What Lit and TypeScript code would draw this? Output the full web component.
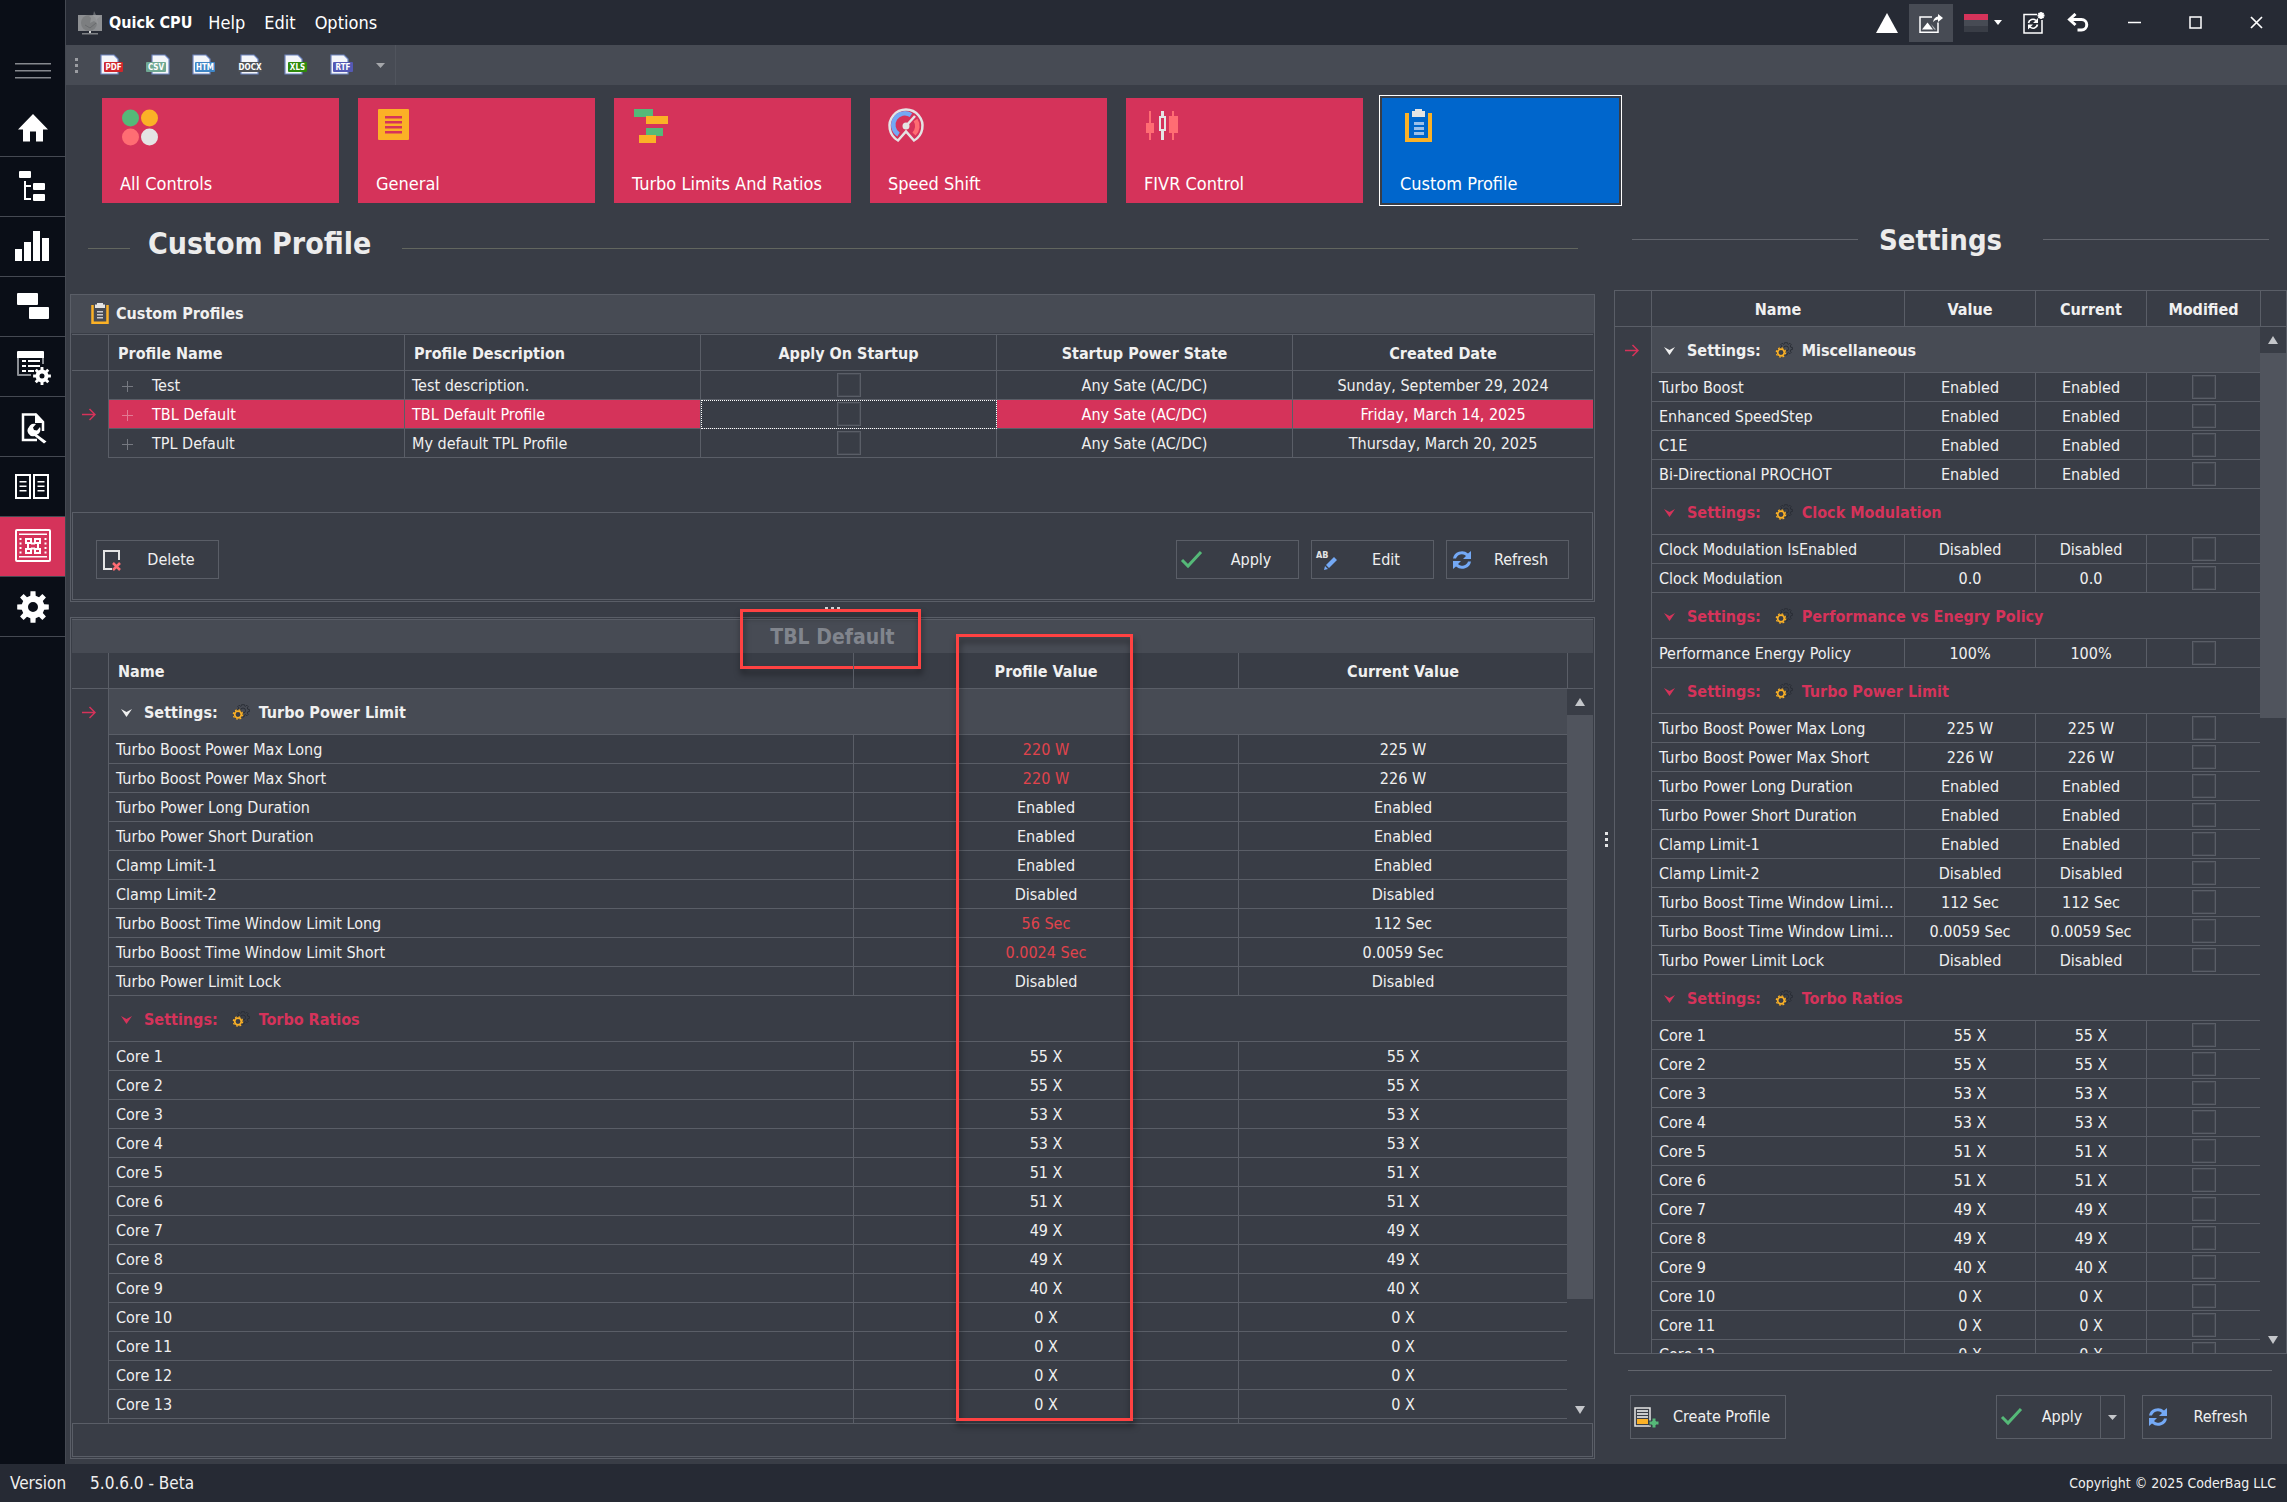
import { LitElement, html, svg, css, nothing, TemplateResult } from "lit";
import { customElement, property } from "lit/decorators.js";
import { classMap } from "lit/directives/class-map.js";

/** Path of a cog wheel with square teeth and a round hole. */
function cog(cx: number, cy: number, outer: number, inner: number, hole: number, teeth = 8): string {
  const pts: string[] = [];
  const step = (Math.PI * 2) / teeth;
  for (let i = 0; i < teeth; i++) {
    const a = i * step - Math.PI / 2;
    const parts: [number, number][] = [[-0.3, inner], [-0.2, outer], [0.2, outer], [0.3, inner]];
    for (const [f, r] of parts) {
      const t = a + f * step;
      pts.push(`${(cx + Math.cos(t) * r).toFixed(2)} ${(cy + Math.sin(t) * r).toFixed(2)}`);
    }
  }
  return `M${pts.join("L")}Z M${cx - hole} ${cy}a${hole} ${hole} 0 1 0 ${hole * 2} 0a${hole} ${hole} 0 1 0 ${-hole * 2} 0Z`;
}

const base = css`
  *, *::before, *::after { box-sizing: border-box; }
  svg { display: block; flex: none; }
  button {
    font: inherit; color: inherit; background: none; border: 0; margin: 0; padding: 0;
    cursor: pointer; display: flex; align-items: center; justify-content: center;
  }
`;

/* ---------- icons ---------- */

const navIcons: { label: string; art: TemplateResult }[] = [
  { label: "Home", art: svg`<path d="M33 17L48 32.500H43V44.500H36V34.500H30V44.500H23V32.500H18Z"/>` },
  { label: "Device tree", art: svg`<rect x="19" y="14" width="12" height="7" rx="1"/><rect x="33" y="26" width="12" height="7" rx="1"/><rect x="33" y="37" width="12" height="7" rx="1"/><path d="M24 24h2v4h5v2h-5v11h5v2h-7z"/>` },
  { label: "Charts", art: svg`<path d="M15 32h7v12h-7zM24 25h7v19h-7zM33 14h7v30h-7zM42 21h7v23h-7z"/>` },
  { label: "Windows", art: svg`<rect x="17" y="16" width="21" height="12" rx="1"/><rect x="29" y="30" width="20" height="12" rx="1"/>` },
  { label: "Table options", art: svg`<path d="M17 15q0-1 1-1h25q1 0 1 1v6h-27z"/><path fill="#8b8e94" d="M17 21h2v16h12v2h-13q-1 0-1-1zM42 21h2v6h-2z"/><path d="M22 23h4v2h-4zM28 23h12v2h-12zM22 28h4v2h-4zM28 28h12v2h-12zM22 33h4v2h-4zM28 33h6v2h-6z"/><path fill-rule="evenodd" d="${cog(42, 39, 9, 6.5, 2.5)}"/>` },
  { label: "Diagnostics", art: svg`<path fill="none" stroke="#fff" stroke-width="2.500" d="M37 43H23V17.500H36L43 25V34"/><path d="M35 16v10h9z"/><path d="M29 30a5.500 5.500 0 0 1 7-3l-3 3.500 1 2.500 3 .5 3-3.500a5.500 5.500 0 0 1-3 7.500l9.500 7-2.500 2-9.500-7.500a5.500 5.500 0 0 1-5.500-9z"/>` },
  { label: "Documentation", art: svg`<rect x="16" y="18" width="14" height="23" fill="none" stroke="#fff" stroke-width="2"/><rect x="34" y="18" width="14" height="23" fill="none" stroke="#fff" stroke-width="2"/><path d="M19.500 24h7v1.500h-7zM19.500 28.500h7v1.500h-7zM19.500 33h7v1.500h-7zM37.500 24h7v1.500h-7zM37.500 28.500h7v1.500h-7zM37.500 33h7v1.500h-7z"/>` },
  { label: "Processor controls", art: svg`<rect x="16" y="13" width="34" height="31" rx="1" fill="none" stroke="#fff" stroke-width="2"/><path d="M19 16.500h28v1.500h-28zM19 39h28v1.500h-28z"/><g fill="none" stroke="#fff" stroke-width="2"><path stroke-dasharray="2 2.500" d="M20.500 21v17M45.500 21v17"/><rect x="26" y="22" width="5" height="4"/><rect x="35" y="22" width="5" height="4"/><rect x="26" y="32" width="5" height="4"/><rect x="35" y="32" width="5" height="4"/><path d="M31 26.500h4M31 31.500h4M28 27v4M38 27v4"/></g>` },
  { label: "Preferences", art: svg`<path fill-rule="evenodd" d="${cog(33, 30, 16, 11.5, 5)}"/>` },
];

const clipboard = (lines: string) => svg`
  <path fill="none" stroke="#fbb126" stroke-width="4" d="M7 4V31H30V4"/>
  <path fill="${lines}" d="M14 13h10v3h-10zM14 18h10v3h-10zM14 23h10v3h-10z"/>
  <path fill="#e4e4e4" d="M15 0h7v2h3v6H12V2h3z"/>`;

const tiles: { label: string; active?: boolean; art: TemplateResult }[] = [
  { label: "All Controls", art: svg`<circle cx="10.500" cy="9" r="8.500" fill="#55b978"/><circle cx="29.500" cy="9" r="8.500" fill="#fbb126"/><circle cx="10.500" cy="28" r="8.500" fill="#ff6d73"/><circle cx="29.500" cy="28" r="8.500" fill="#e4e4e4"/>` },
  { label: "General", art: svg`<rect x="2" width="31" height="31" rx="1" fill="#fbb126"/><path fill="#d5335a" d="M9 7h17v2.500h-17zM9 12h17v2.500h-17zM9 17h17v2.500h-17zM9 22h17v2.500h-17z"/>` },
  { label: "Turbo Limits And Ratios", art: svg`<path fill="#55b978" d="M2 0h19v8h-19zM14 19h17v8h-17z"/><path fill="#fbb126" d="M14 7h22v8h-22zM7 26h17v8h-17z"/>` },
  { label: "Speed Shift", art: svg`<path fill="none" stroke="#e4e4e4" stroke-width="2.500" d="M10 31.500A16.500 16.500 0 1 1 26 31.500L18 22.500Z"/><path fill="none" stroke="#74a9f5" stroke-width="4.500" d="M10.500 25.500A11 11 0 0 1 23 6.200"/><path fill="none" stroke="#ff6d73" stroke-width="4.500" d="M27.500 11A11 11 0 0 1 26 25"/><circle cx="18" cy="17" r="3.500" fill="#e4e4e4"/><path stroke="#e4e4e4" stroke-width="2.500" d="M18 17L27 7"/>` },
  { label: "FIVR Control", art: svg`<path fill="#ff6d73" d="M5 2h2v12h3v10h-3v7h-2v-7h-3v-10h3zM28 2h2v5h4v17h-4v7h-2v-7h-3v-17h3z"/><path fill="#e4e4e4" fill-rule="evenodd" d="M17 2h3v5h2v15h-2v9h-3v-9h-2v-15h2zM17 9v11h3v-11z"/>` },
  { label: "Custom Profile", active: true, art: clipboard("#9cc0ea") },
];

const exports_: { label: string; color: string; x: number; w: number; page: number }[] = [
  { label: "PDF", color: "#d0272c", x: 4, w: 19, page: 1 },
  { label: "CSV", color: "#6fa893", x: 0, w: 20, page: 6 },
  { label: "HTM", color: "#3f86c6", x: 3, w: 20, page: 1 },
  { label: "DOCX", color: "#4f5257", x: 0, w: 24, page: 3 },
  { label: "XLS", color: "#2f8a0c", x: 4, w: 19, page: 1 },
  { label: "RTF", color: "#5459b4", x: 3, w: 20, page: 1 },
];

const icons = {
  del: svg`<path fill="none" stroke="#e4e4e4" stroke-width="2" d="M12 21H4V3H19V12"/><path stroke="#ff6d73" stroke-width="2.500" d="M13 15l7 7M20 15l-7 7"/>`,
  check: svg`<path fill="none" stroke="#55b978" stroke-width="3" d="M2 12L8 18L21 4"/>`,
  edit: svg`<text x="1" y="10" font-size="9" font-weight="700" fill="#e4e4e4">AB</text><path fill="#74a9f5" d="M19 9l3 3-8 8-3-3zM10 18l3 3-4 1z"/>`,
  refresh: svg`<g fill="#74a9f5"><path d="M3 10.500A9 8.500 0 0 1 18 5.500L21 3V11H13L16 8A6 6 0 0 0 6 10.500Z"/><path d="M21 13.500A9 8.500 0 0 1 6 18.500L3 21V13H11L8 16A6 6 0 0 0 18 13.500Z"/></g>`,
  create: svg`<rect x="1" y="3" width="15" height="18" fill="none" stroke="#e4e4e4" stroke-width="1.500"/><path fill="#c9cacc" d="M3 5h11v2h-11zM3 8h11v2h-11zM3 11h11v2h-11z"/><path fill="#fbb126" d="M3 14h11v5h-11z"/><path fill="#55b978" stroke="#393d46" stroke-width="1" d="M18 13h4v3h3v4h-3v3h-4v-3h-3v-4h3z"/>`,
};

const arrow = html`<svg class="arrow" width="14" height="13" viewBox="0 0 14 13" fill="none" stroke="#d5335a" stroke-width="1.500"><path d="M0 6.500H13M7.500 1L13 6.500L7.500 12"/></svg>`;

/* ---------- grouped settings grid ---------- */

type Row = { name: string; a: string; b: string; diff?: boolean };
type Group = { title: string; focused?: boolean; rows: Row[] };

const row = (name: string, a: string, b = a): Row => ({ name, a, b, diff: a !== b });
const cores = (count: number): Row[] =>
  ["55 X", "55 X", "53 X", "53 X", "51 X", "51 X", "49 X", "49 X", "40 X"]
    .concat(Array(Math.max(0, count - 9)).fill("0 X"))
    .map((v, i) => row(`Core ${i + 1}`, v));

const profileGroups: Group[] = [
  {
    title: "Turbo Power Limit", focused: true, rows: [
      row("Turbo Boost Power Max Long", "220 W", "225 W"),
      row("Turbo Boost Power Max Short", "220 W", "226 W"),
      row("Turbo Power Long Duration", "Enabled"),
      row("Turbo Power Short Duration", "Enabled"),
      row("Clamp Limit-1", "Enabled"),
      row("Clamp Limit-2", "Disabled"),
      row("Turbo Boost Time Window Limit Long", "56 Sec", "112 Sec"),
      row("Turbo Boost Time Window Limit Short", "0.0024 Sec", "0.0059 Sec"),
      row("Turbo Power Limit Lock", "Disabled"),
    ],
  },
  { title: "Torbo Ratios", rows: [...cores(13), row("", "")] },
];

const systemGroups: Group[] = [
  {
    title: "Miscellaneous", focused: true, rows: [
      row("Turbo Boost", "Enabled"), row("Enhanced SpeedStep", "Enabled"),
      row("C1E", "Enabled"), row("Bi-Directional PROCHOT", "Enabled"),
    ],
  },
  { title: "Clock Modulation", rows: [row("Clock Modulation IsEnabled", "Disabled"), row("Clock Modulation", "0.0")] },
  { title: "Performance vs Enegry Policy", rows: [row("Performance Energy Policy", "100%")] },
  {
    title: "Turbo Power Limit", rows: [
      row("Turbo Boost Power Max Long", "225 W"),
      row("Turbo Boost Power Max Short", "226 W"),
      row("Turbo Power Long Duration", "Enabled"),
      row("Turbo Power Short Duration", "Enabled"),
      row("Clamp Limit-1", "Enabled"),
      row("Clamp Limit-2", "Disabled"),
      row("Turbo Boost Time Window Limit Long", "112 Sec"),
      row("Turbo Boost Time Window Limit Short", "0.0059 Sec"),
      row("Turbo Power Limit Lock", "Disabled"),
    ],
  },
  { title: "Torbo Ratios", rows: cores(12) },
];

const tableStyles = css`
  table { width: 100%; table-layout: fixed; border-collapse: separate; border-spacing: 0; }
  th, td { padding: 2px 7px 0; height: 29px; line-height: 20px; text-align: center; font-weight: 400;
    border-right: 1px solid var(--line); border-bottom: 1px solid var(--line);
    white-space: nowrap; overflow: hidden; text-overflow: ellipsis; }
  thead th, thead td { height: 36px; font-weight: 700; }
  th:last-child, td:last-child { border-right: 0; }
  .left { text-align: left; }
  thead .left { padding-left: 9px; }
  .mark { width: 37px; padding: 0 0 0 10px; }
  .tick { padding: 0; }
  tbody .mark { border-bottom: 0; }
  input[type="checkbox"] { appearance: none; display: block; width: 24px; height: 24px; margin: 0 auto;
    border: 1px solid #5a5e67; box-shadow: inset 0 0 0 1px #444851; }
`;

@customElement("settings-grid")
export class SettingsGrid extends LitElement {
  @property({ attribute: false }) groups: Group[] = [];
  @property({ attribute: false }) heads: string[] = [];
  @property({ type: Boolean, reflect: true }) modified = false;
  @property({ type: Number }) thumb = 50;

  static styles = [base, tableStyles, css`
    :host { display: flex; min-height: 0; overflow: hidden; }
    .view { flex: 1; min-width: 0; overflow: hidden; position: relative; background: linear-gradient(var(--line), var(--line)) 36px 0 / 1px 100% no-repeat; }
    .c1 { width: 385px; }
    .c2 { width: 328px; }
    :host([modified]) .c1 { width: 131px; }
    :host([modified]) .c2 { width: 111px; }
    .c3 { width: 113px; }
    .group th { height: 46px; padding: 2px 0 0 12px; font-weight: 700; color: #d5335a; text-align: left; }
    .group.focused th { color: #f0f0f0; background: #474b54; }
    .label { display: flex; align-items: center; }
    .label button { width: 11px; height: 20px; margin-right: 12px; }
    .cog { margin: 0 9px 0 14px; }
    .diff { color: #e0434c; }
    .bar { flex: none; width: 26px; display: flex; flex-direction: column; align-items: stretch; }
    .corner { height: 36px; flex: none; border-left: 1px solid var(--line); border-bottom: 1px solid var(--line); }
    .bar button { height: 26px; flex: none; }
    .track { flex: 1; }
    .thumb { background: #50545d; }
  `];

  render() {
    const span = this.modified ? 4 : 3;
    return html`
      <div class="view">
        <table>
          <thead><tr>
            <td class="mark"></td>
            ${this.heads.map((h, i) => html`<th scope="col" class=${i ? `c${i}` : this.modified ? "" : "left"}>${h}</th>`)}
          </tr></thead>
          ${this.groups.map(g => html`<tbody>
            <tr class=${classMap({ group: true, focused: !!g.focused })}>
              <td class="mark">${g.focused ? arrow : nothing}</td>
              <th colspan=${span} scope="rowgroup"><span class="label">
                <button aria-label="Collapse ${g.title}"><svg width="11" height="8" viewBox="0 0 11 8" fill="currentColor"><path d="M0 0L5.500 3L11 0L5.500 8Z"/></svg></button>
                Settings:
                <svg class="cog" width="18" height="18" viewBox="0 0 18 18"><path fill="none" stroke="#2a2e36" d="${cog(11, 6.500, 6.500, 5, 2.500)}"/><circle cx="6" cy="10.500" r="5" fill="#393d46"/><circle cx="6" cy="10.500" r="4.700" fill="none" stroke="#fbb126" stroke-width="1.200" stroke-dasharray="1.850 1.850"/><circle cx="6" cy="10.500" r="3.300" fill="none" stroke="#fbb126" stroke-width="1.700"/></svg>
                ${g.title}</span></th>
            </tr>
            ${g.rows.map(r => html`<tr>
              <td class="mark"></td>
              <td class="left">${r.name}</td>
              <td class=${classMap({ diff: !!r.diff })}>${r.a}</td>
              <td>${r.b}</td>
              ${this.modified ? html`<td class="tick"><input type="checkbox" aria-label="${r.name} modified"></td>` : nothing}
            </tr>`)}
          </tbody>`)}
        </table>
      </div>
      <div class="bar">
        <div class="corner"></div>
        <button aria-label="Scroll up"><svg width="10" height="8" viewBox="0 0 10 8" fill="#c4c6ca"><path d="M5 0L10 8H0Z"/></svg></button>
        <div class="track"><div class="thumb" style="height:${this.thumb}%"></div></div>
        <button aria-label="Scroll down"><svg width="10" height="8" viewBox="0 0 10 8" fill="#c4c6ca"><path d="M5 8L10 0H0Z"/></svg></button>
      </div>`;
  }
}

/* ---------- application shell ---------- */

const profiles = [
  { name: "Test", text: "Test description.", date: "Sunday, September 29, 2024" },
  { name: "TBL Default", text: "TBL Default Profile", date: "Friday, March 14, 2025", selected: true },
  { name: "TPL Default", text: "My default TPL Profile", date: "Thursday, March 20, 2025" },
];

@customElement("app-root")
export class AppRoot extends LitElement {
  static styles = [base, tableStyles, css`
    :host {
      --line: #5a5e67;
      display: grid; grid-template: minmax(0, 1fr) 38px / 66px minmax(0, 1fr);
      height: 100vh; overflow: hidden; background: #393d46; color: #f0f0f0;
      font: 16px/20px "DejaVu Sans Condensed", "DejaVu Sans", sans-serif;
    }
    .nav { background: #0a0e17; border-right: 1px solid #454952; display: flex; flex-direction: column; }
    .burger { height: 97px; padding-top: 45px; }
    .nav a { display: block; height: 60px; border-bottom: 1px solid #454952; }
    .nav a.on { background: #d5335a; }
    .main { display: flex; flex-direction: column; min-width: 0; min-height: 0; }

    .title { height: 45px; flex: none; background: #262a34; display: flex; align-items: center; padding-left: 12px; color: #fff; }
    .brand { font-weight: 700; margin: 0 16px 0 7px; }
    .menu { display: flex; gap: 19px; font-size: 18px; flex: 1; }
    .tool { width: 44px; height: 38px; }
    .tool.on { background: #474b54; }
    .palette { width: 59px; height: 38px; gap: 6px; }
    .win { width: 61px; height: 45px; }
    .undo { margin-right: 4px; }

    .export { height: 40px; flex: none; background: #474b54; display: flex; }
    .export-set { display: flex; align-items: center; gap: 22px; padding: 0 10px 0 9px; border-right: 1px solid #50545d; }

    .tiles { display: flex; gap: 19px; padding: 13px 36px 10px; flex: none; }
    .tile { width: 237px; height: 105px; background: #d5335a; color: #fff; font-size: 18px; line-height: 24px;
      padding: 11px 18px 7px; flex-direction: column; align-items: flex-start; justify-content: space-between; }
    .tile.on { background: #0066cc; outline: 1px solid #fff; outline-offset: 2px; }

    .body { flex: 1; min-height: 0; display: grid; grid-template-columns: minmax(0, 1fr) 19px 673px; }
    .work { display: flex; flex-direction: column; min-height: 0; padding: 0 0 5px 4px; }
    .side { display: flex; flex-direction: column; min-height: 0; }
    .head { display: flex; align-items: center; flex: none; height: 81px; padding: 0 17px 20px 18px; }
    .head h1 { font-size: 30px; line-height: 36px; font-weight: 700; margin: 0; padding: 0 31px 0 18px; color: #ececec; }
    .side .head { height: 77px; padding: 0 18px 24px; }
    .side h1 { font-size: 29px; padding: 0 41px 0 21px; }
    .rule { height: 1px; background: #62665f; flex: 1; }
    .work .rule { margin-top: 9px; }
    .work .rule:first-child { flex: 0 0 42px; }
    .side .rule { background: #62656d; }

    .panel { border: 1px solid var(--line); padding: 0 1px 1px; display: flex; flex-direction: column; }
    .panel-title { display: flex; align-items: center; gap: 7px; height: 39px; background: #474b54; margin: 0 -1px;
      padding: 0 20px; font-size: 16px; font-weight: 700; border-bottom: 1px solid #393d46; }
    .profiles { border-top: 1px solid var(--line); padding-bottom: 54px; }
    .profiles th { width: 296px; }
    .profiles th:last-child { width: auto; }
    .selected td:not(.mark) { background: #d5335a; color: #fff; }
    .selected td.focus { background: none; outline: 1px dotted #fff; outline-offset: -1px; }
    .expand { display: flex; align-items: center; gap: 19px; padding-left: 6px; }
    .foot { border: 1px solid var(--line); height: 88px; display: flex; gap: 12px; padding: 27px 23px; align-items: flex-start; }
    .btn { border: 1px solid var(--line); height: 39px; width: 123px; padding-left: 3px; }
    .btn span { flex: 1; text-align: center; }
    .grow { flex: 1; }
    .split { height: 15px; flex: none; display: flex; justify-content: center; padding-top: 5px; }
    .vsplit { display: flex; align-items: center; padding: 2px 0 0 10px; }

    .detail { flex: 1; min-height: 0; position: relative; padding-top: 1px; }
    .caption { position: relative; flex: none; height: 34px; border-top: 1px solid var(--line); background: #474b54; }
    .caption h2 { margin: 0; text-align: center; font-size: 21px; line-height: 34px; color: #81858d; }
    .detail settings-grid { flex: 1; }
    .strip { height: 34px; flex: none; border: 1px solid var(--line); }
    .note { position: absolute; border: 3px solid #ff4242; filter: drop-shadow(1px 5px 3px rgba(0, 0, 0, 0.5)); pointer-events: none; }
    .note-name { left: calc(50% - 93px); top: -11px; width: 181px; height: 60px; }
    .note-values { right: 461px; top: 16px; bottom: 37px; width: 177px; }

    .frame { border: 1px solid var(--line); flex: 1; min-height: 0; display: flex; }
    .frame settings-grid { flex: 1; }
    .actions { flex: none; margin: 16px 15px 25px 14px; border-top: 1px solid #62656d; padding: 24px 0 0 2px; display: flex; }
    .actions .btn { height: 44px; width: 130px; }
    .actions .wide { width: 156px; }
    .actions .main-part { width: 105px; }
    .actions .drop { width: 25px; padding: 0; margin: 0 17px 0 -1px; }

    .status { grid-column: 1 / -1; background: #262a34; display: flex; align-items: center; gap: 24px; padding: 0 11px 0 10px; font-size: 17px; }
    .status .copy { margin-left: auto; font-size: 14px; }
  `];

  private button(label: string, art: TemplateResult, extra = "") {
    return html`<button class="btn ${extra}"><svg width="24" height="24" viewBox="0 0 24 24" overflow="visible">${art}</svg><span>${label}</span></button>`;
  }

  render() {
    return html`
      <nav class="nav" aria-label="Sections">
        <button class="burger" aria-label="Toggle menu"><svg width="36" height="18" viewBox="0 0 36 18" fill="#85888e"><path d="M0 1h36v1.500H0zM0 8h36v1.500H0zM0 15h36v1.500H0z"/></svg></button>
        ${navIcons.map((n, i) => html`<a href="#" aria-label=${n.label} class=${classMap({ on: i === 7 })}><svg width="64" height="60" viewBox="0 0 64 60" fill="#fff">${n.art}</svg></a>`)}
      </nav>

      <main class="main">
        <header class="title">
          <svg width="24" height="24" viewBox="0 0 24 24"><path fill="#8d8f92" d="M0 4h24v16H0z"/><circle cx="11" cy="12" r="8" fill="#7c7e80"/><path fill="#a3a5a7" d="M16 0l2 4 5 1-4 3 1 5-4-3-4 2 1-5-2-2h4z" opacity=".5"/><path stroke="#696b6e" fill="none" d="M7 14l5 3 6-5"/><path fill="#d0d1d3" d="M11 20h2v3h-2z"/><path fill="#7e8185" d="M4 22h16v1.500H4z"/></svg>
          <span class="brand">Quick CPU</span>
          <div class="menu"><button>Help</button><button>Edit</button><button>Options</button></div>
          <button class="tool" aria-label="Always on top"><svg width="22" height="20" viewBox="0 0 22 20" fill="#fff"><path d="M11 0L22 20H0Z"/></svg></button>
          <button class="tool on" aria-label="Share picture"><svg width="24" height="20" viewBox="0 0 24 20"><path fill="none" stroke="#fff" stroke-width="1.500" d="M13 4H1V19.200H19V9.500"/><path fill="#fff" d="M3 16.500L8.500 9.500L14 16.500Z"/><path fill="#b5b7bb" d="M12 11l5 5.500h-2z"/><path fill="#fff" d="M14 9q1-5 5-5.500V1l5 4-5 4V6.500q-3 0-5 2.500z"/></svg></button>
          <button class="palette" aria-label="Palette"><svg width="24" height="18" viewBox="0 0 24 18"><path fill="#d5335a" d="M0 0h24v6H0z"/><path fill="#474b54" d="M0 6h24v6H0z"/><path fill="#393d46" d="M0 12h24v6H0z"/></svg><svg width="8" height="5" viewBox="0 0 8 5" fill="#fff"><path d="M0 0h8L4 5z"/></svg></button>
          <button class="tool" aria-label="Reload settings"><svg width="22" height="22" viewBox="0 0 22 22"><path fill="none" stroke="#fff" stroke-width="1.500" d="M14 2.500H1V21H19V8"/><path fill="none" stroke="#fff" stroke-width="1.700" d="M5.500 11A4.500 4.500 0 0 1 13 8.500M14.500 12.500A4.500 4.500 0 0 1 7 15"/><path fill="#fff" d="M15 6v5h-5zM5 17.500v-5h5z"/><path stroke="#fff" stroke-width="1.800" d="M18 0v7M14.500 3.500h7M15.500 1l5 5M20.500 1l-5 5"/></svg></button>
          <button class="tool undo" aria-label="Undo"><svg width="22" height="19" viewBox="0 0 22 19" fill="none" stroke="#fff" stroke-width="3"><path d="M8.500 1L2.500 6.500L8.500 12M3 6.500H14.500a5 5 0 0 1 0 10.500H10.500"/></svg></button>
          <button class="win" aria-label="Minimize"><svg width="13" height="13" viewBox="0 0 13 13"><path stroke="#fff" stroke-width="1.500" d="M0 6.500h13"/></svg></button>
          <button class="win" aria-label="Maximize"><svg width="13" height="13" viewBox="0 0 13 13"><path fill="none" stroke="#fff" stroke-width="1.500" d="M1 1h11v11H1z"/></svg></button>
          <button class="win" aria-label="Close"><svg width="13" height="13" viewBox="0 0 13 13"><path stroke="#fff" stroke-width="1.700" d="M1 1l11 11M12 1L1 12"/></svg></button>
        </header>

        <div class="export">
          <div class="export-set">
            <svg width="3" height="15" viewBox="0 0 3 15" fill="#9b9da2"><path d="M0 0h3v3H0zM0 6h3v3H0zM0 12h3v3H0z"/></svg>
            ${exports_.map(e => html`<button aria-label="Export ${e.label}"><svg width="24" height="24" viewBox="0 0 24 24">
              <path fill="#f4f6fa" stroke="#6f86c0" stroke-width="1.200" d="M${e.page} 2h13l4 4v15h-17z"/>
              <rect x=${e.x} y="9" width=${e.w} height="10" rx="1" fill=${e.color}/>
              <text x=${e.x + e.w / 2} y="17" text-anchor="middle" font-size="8" font-weight="700" fill="#fff">${e.label}</text></svg></button>`)}
            <button aria-label="More export formats"><svg width="9" height="5" viewBox="0 0 9 5" fill="#a5a7ab"><path d="M0 0h9L4.500 5z"/></svg></button>
          </div>
        </div>

        <nav class="tiles" aria-label="Controls">
          ${tiles.map(t => html`<button class=${classMap({ tile: true, on: !!t.active })}><svg width="40" height="37" viewBox="0 0 40 37" overflow="visible">${t.art}</svg><span>${t.label}</span></button>`)}
        </nav>

        <div class="body">
          <section class="work">
            <div class="head"><span class="rule"></span><h1>Custom Profile</h1><span class="rule"></span></div>

            <div class="panel">
              <div class="panel-title"><svg width="18" height="22" viewBox="0 0 18 22"><path fill="none" stroke="#fbb126" stroke-width="2.500" d="M1.500 2V19.800H16.500V2"/><path fill="#c9cacc" d="M6 8h6v1.500H6zM6 11h6v1.500H6zM6 14h6v1.500H6z"/><path fill="#e4e4e4" d="M6 0h6v1.500h2V5H4V1.500h2z"/></svg>Custom Profiles</div>
              <div class="profiles">
                <table>
                  <thead><tr><td class="mark"></td><th scope="col" class="left">Profile Name</th><th scope="col" class="left">Profile Description</th><th scope="col">Apply On Startup</th><th scope="col">Startup Power State</th><th scope="col">Created Date</th></tr></thead>
                  <tbody>
                    ${profiles.map(p => html`<tr class=${p.selected ? "selected" : ""}>
                      <td class="mark">${p.selected ? arrow : nothing}</td>
                      <td class="left"><span class="expand"><button aria-label="Expand ${p.name}"><svg width="11" height="11" viewBox="0 0 11 11" stroke=${p.selected ? "#e27a93" : "#767981"} stroke-width="1"><path d="M5.500 0v11M0 5.500h11"/></svg></button>${p.name}</span></td>
                      <td class="left">${p.text}</td>
                      <td class=${p.selected ? "tick focus" : "tick"}><input type="checkbox" aria-label="Apply ${p.name} on startup"></td>
                      <td>Any Sate (AC/DC)</td>
                      <td>${p.date}</td>
                    </tr>`)}
                  </tbody>
                </table>
              </div>
              <div class="foot">
                ${this.button("Delete", icons.del)}<span class="grow"></span>
                ${this.button("Apply", icons.check)}${this.button("Edit", icons.edit)}${this.button("Refresh", icons.refresh)}
              </div>
            </div>

            <div class="split"><svg width="16" height="3" viewBox="0 0 16 3" fill="#d5d6d8"><path d="M0 0h3v3H0zM6 0h3v3H6zM12 0h3v3h-3z"/></svg></div>

            <div class="panel detail">
              <div class="caption"><h2>TBL Default</h2><span class="note note-name"></span></div>
              <settings-grid .groups=${profileGroups} .heads=${["Name", "Profile Value", "Current Value"]} .thumb=${85.7}></settings-grid>
              <div class="strip"></div>
              <span class="note note-values"></span>
            </div>
          </section>

          <div class="vsplit"><svg width="3" height="15" viewBox="0 0 3 15" fill="#e4e5e6"><path d="M0 0h3v3H0zM0 6h3v3H0zM0 12h3v3H0z"/></svg></div>

          <aside class="side">
            <div class="head"><span class="rule"></span><h1>Settings</h1><span class="rule"></span></div>
            <div class="frame">
              <settings-grid modified .groups=${systemGroups} .heads=${["Name", "Value", "Current", "Modified"]} .thumb=${37.5}></settings-grid>
            </div>
            <div class="actions">
              ${this.button("Create Profile", icons.create, "wide")}<span class="grow"></span>
              ${this.button("Apply", icons.check, "main-part")}
              <button class="btn drop" aria-label="Apply options"><svg width="9" height="5" viewBox="0 0 9 5" fill="#c4c6ca"><path d="M0 0h9L4.500 5z"/></svg></button>
              ${this.button("Refresh", icons.refresh)}
            </div>
          </aside>
        </div>
      </main>

      <footer class="status"><span>Version</span><span>5.0.6.0 - Beta</span><span class="copy">Copyright © 2025 CoderBag LLC</span></footer>`;
  }
}
